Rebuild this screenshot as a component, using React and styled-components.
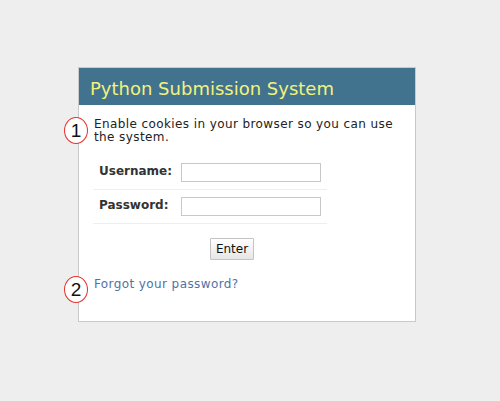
import React from "react";
import styled, { createGlobalStyle } from "styled-components";

const GlobalStyle = createGlobalStyle`
  html, body { margin: 0; padding: 0; background: #eeeeee; }
  body { font-family: "DejaVu Sans", Verdana, sans-serif; }
  * { box-sizing: border-box; }
`;

const Page = styled.div`
  min-height: 401px;
  padding: 67px 0 0 78px;
`;

const Card = styled.div`
  width: 338px;
  height: 255px;
  background: #ffffff;
  border: 1px solid #c9c9c9;
`;

const Header = styled.div`
  height: 37px;
  background: #41738f;
  color: #f2f27c;
  font-size: 18px;
  padding: 3px 0 0 11px;
  display: flex;
  align-items: center;
`;

const Body = styled.div`
  padding: 0 15px;
`;

const Annotated = styled.div`
  position: relative;
  margin-top: ${(p) => p.$top}px;
`;

const Marker = styled.span`
  position: absolute;
  left: -30px;
  top: -1px;
  width: 24px;
  height: 27px;
  border: 1px solid #e8302c;
  border-radius: 50%;
  background: #ffffff;
  display: flex;
  align-items: center;
  justify-content: center;
  font-family: "Liberation Sans", Arial, sans-serif;
  font-size: 19px;
  color: #111;
  line-height: 1;
`;

const Intro = styled.p`
  margin: 0;
  font-size: 12px;
  line-height: 13px;
  letter-spacing: 0.4px;
  color: #222;
`;

const Form = styled.form`
  margin: 12px 0 0 -1px;
  width: 234px;
`;

const Row = styled.div`
  display: grid;
  grid-template-columns: 88px 140px;
  align-items: center;
  height: 34px;
  border-bottom: 1px solid #eeeeee;
`;

const Label = styled.label`
  padding: 0 0 4px 6px;
  font-weight: bold;
  font-size: 12px;
  color: #333;
`;

const Input = styled.input`
  width: 140px;
  height: 19px;
  border: 1px solid #c8c8c8;
  background: #fff;
  padding: 0 3px;
  font-size: 12px;
  margin: 0;
`;

const ButtonRow = styled.div`
  margin-top: 14px;
  padding-left: 117px;
`;

const Button = styled.button`
  width: 44px;
  height: 22px;
  border: 1px solid #c4c4c4;
  border-radius: 1px;
  background: linear-gradient(#ffffff, #e6e6e6);
  font-family: "DejaVu Sans", Verdana, sans-serif;
  font-size: 12px;
  color: #111;
  padding: 0;
`;

const Link = styled.a`
  display: block;
  font-size: 12px;
  line-height: 14px;
  letter-spacing: 0.4px;
  color: #4f73a6;
  text-decoration: none;
`;

export default function App() {
  return (
    <>
      <GlobalStyle />
      <Page>
        <Card>
          <Header>Python Submission System</Header>
          <Body>
            <Annotated $top={13}>
              <Marker>1</Marker>
              <Intro>Enable cookies in your browser so you can use the system.</Intro>
            </Annotated>
            <Form onSubmit={(e) => e.preventDefault()}>
              <Row>
                <Label htmlFor="u">Username:</Label>
                <Input id="u" type="text" />
              </Row>
              <Row>
                <Label htmlFor="p">Password:</Label>
                <Input id="p" type="password" />
              </Row>
              <ButtonRow>
                <Button type="submit">Enter</Button>
              </ButtonRow>
            </Form>
            <Annotated $top={17}>
              <Marker>2</Marker>
              <Link href="#">Forgot your password?</Link>
            </Annotated>
          </Body>
        </Card>
      </Page>
    </>
  );
}
